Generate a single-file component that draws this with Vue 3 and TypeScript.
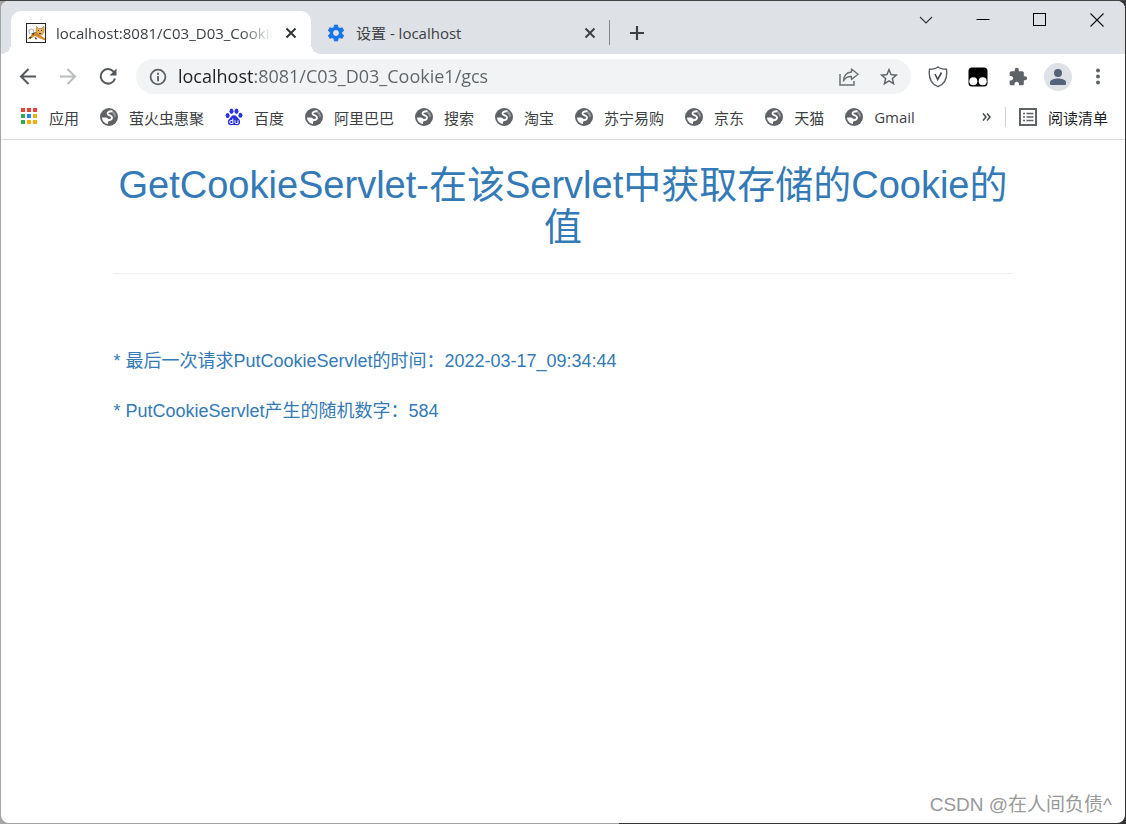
<script setup lang="ts">
import { ref } from 'vue'

interface Bookmark {
  label: string
  icon: 'globe' | 'apps' | 'paw'
}

const bookmarks: Bookmark[] = [
  { label: '应用', icon: 'apps' },
  { label: '萤火虫惠聚', icon: 'globe' },
  { label: '百度', icon: 'paw' },
  { label: '阿里巴巴', icon: 'globe' },
  { label: '搜索', icon: 'globe' },
  { label: '淘宝', icon: 'globe' },
  { label: '苏宁易购', icon: 'globe' },
  { label: '京东', icon: 'globe' },
  { label: '天猫', icon: 'globe' },
  { label: 'Gmail', icon: 'globe' },
]

const appColors = ['#ea4335', '#ea4335', '#ea4335', '#34a853', '#1e88f5', '#fbab0a', '#34a853', '#fbab0a', '#fbab0a']

const url = ref('localhost:8081/C03_D03_Cookie1/gcs')
const lastRequest = '2022-03-17_09:34:44'
const randomNumber = 584
</script>

<template>
  <div class="desktop">
    <div class="window">
      <header class="tabstrip">
        <div class="tab active">
          <svg class="favicon" width="20" height="20" viewBox="0 0 20 20" aria-hidden="true">
            <rect x="0.5" y="0.5" width="19" height="19" fill="#fff" stroke="#222" />
            <path d="M4 11 C2 9 3 6 5.500 6 S8 8 7 9" fill="none" stroke="#b5b5b5" stroke-width="1.200" />
            <path d="M1 16.500 L6 11.500 L10 8.500 L14 12 L19 15.500 L19 17.500 L13 15 L9 13 L5 15.500 Z" fill="#d58b28" />
            <path d="M10.500 3.500 L12.500 5.500 L15.500 5.500 L18 3.500 L18 9 L16 12 L12 11.500 L10 8 Z" fill="#e3b553" stroke="#a77524" stroke-width="0.600" />
            <path d="M5 11 L9 9 L7.500 12 Z M3 14 L6 14 L4 16 Z M8.500 14 L11 15 L10 17 Z" fill="#333" />
            <path d="M12 7h1v1h-1z M15 7h1v1h-1z M13 10h2v1h-2z" fill="#4a3514" />
          </svg>
          <span class="title fade">localhost:8081/C03_D03_Cookie1</span>
          <button class="close" aria-label="关闭标签页">
            <svg width="12" height="12" viewBox="0 0 12 12"><path d="M1.500 1.500 L10.500 10.500 M10.500 1.500 L1.500 10.500" stroke="#2d3034" stroke-width="1.900" /></svg>
          </button>
        </div>
        <div class="tab second">
          <svg class="favicon" width="20" height="20" viewBox="0 0 24 24" aria-hidden="true">
            <path fill="#1a73e8" d="M19.430 12.980c.04-.32.070-.64.070-.98s-.03-.66-.07-.98l2.110-1.650c.19-.15.24-.42.12-.64l-2-3.460c-.12-.22-.39-.3-.61-.22l-2.490 1c-.52-.4-1.080-.73-1.690-.98l-.38-2.650C14.460 2.180 14.250 2 14 2h-4c-.25 0-.46.180-.49.420l-.38 2.650c-.61.250-1.170.59-1.690.98l-2.490-1c-.23-.09-.49 0-.61.220l-2 3.460c-.13.220-.07.490.12.640l2.110 1.650c-.04.320-.07.650-.07.980s.03.660.07.980l-2.110 1.650c-.19.150-.24.420-.12.640l2 3.460c.12.220.39.300.61.220l2.490-1c.52.400 1.080.730 1.690.980l.38 2.650c.03.240.240.420.490.420h4c.25 0 .46-.18.490-.42l.38-2.650c.61-.25 1.170-.59 1.690-.98l2.490 1c.23.090.49 0 .61-.22l2-3.460c.12-.22.070-.49-.12-.64l-2.110-1.650zM12 15.500c-1.930 0-3.500-1.570-3.500-3.500s1.570-3.500 3.500-3.500 3.500 1.570 3.500 3.500-1.570 3.500-3.500 3.500z" />
          </svg>
          <span class="title">设置 - localhost</span>
          <button class="close" aria-label="关闭标签页">
            <svg width="12" height="12" viewBox="0 0 12 12"><path d="M1.500 1.500 L10.500 10.500 M10.500 1.500 L1.500 10.500" stroke="#3c4043" stroke-width="1.900" /></svg>
          </button>
        </div>
        <button class="new-tab" aria-label="新标签页">
          <svg width="16" height="16" viewBox="0 0 16 16"><path d="M8 1v14M1 8h14" stroke="#3c4043" stroke-width="2.200" /></svg>
        </button>
        <div class="controls">
          <button aria-label="搜索标签页">
            <svg width="14" height="14" viewBox="0 0 14 14"><path d="M1 4 L7 10 L13 4" fill="none" stroke="#333" stroke-width="1.100" /></svg>
          </button>
          <button aria-label="最小化">
            <svg width="14" height="14" viewBox="0 0 14 14"><path d="M0.500 6.500h13" stroke="#000" /></svg>
          </button>
          <button aria-label="最大化">
            <svg width="14" height="14" viewBox="0 0 14 14"><rect x="0.500" y="0.500" width="12" height="12" fill="none" stroke="#000" /></svg>
          </button>
          <button aria-label="关闭">
            <svg width="14" height="14" viewBox="0 0 14 14"><path d="M0.500 0.500 L13.500 13.500 M13.500 0.500 L0.500 13.500" stroke="#111" stroke-width="1.100" /></svg>
          </button>
        </div>
      </header>

      <nav class="toolbar" aria-label="导航">
        <button class="tool" aria-label="后退">
          <svg width="18" height="18" viewBox="0 0 18 18"><path d="M17 8.500H2M9.500 1 L2 8.500 L9.500 16" fill="none" stroke="#54585d" stroke-width="2" /></svg>
        </button>
        <button class="tool" aria-label="前进">
          <svg width="18" height="18" viewBox="0 0 18 18"><path d="M1 8.500h15M8.500 1 L16 8.500 L8.500 16" fill="none" stroke="#babcbe" stroke-width="2" /></svg>
        </button>
        <button class="tool" aria-label="重新加载">
          <svg width="18" height="18" viewBox="0 0 18 18">
            <path d="M14.800 3.800 A7.300 7.300 0 1 0 16 10.500" fill="none" stroke="#54585d" stroke-width="2" />
            <path d="M17.500 0.500 V7.500 H10.500 Z" fill="#54585d" />
          </svg>
        </button>
        <div class="omnibox">
          <button class="info" aria-label="查看网站信息">
            <svg width="18" height="18" viewBox="0 0 18 18"><circle cx="9" cy="9" r="7.400" fill="none" stroke="#5f6368" stroke-width="1.800" /><path d="M9 8v5.200M9 4.800v1.900" stroke="#5f6368" stroke-width="1.900" /></svg>
          </button>
          <input v-model="url" class="address" type="text" aria-label="地址" spellcheck="false" />
          <button class="tool" aria-label="分享">
            <svg width="20" height="18" viewBox="0 0 20 18">
              <path d="M1 6v11h14v-4" fill="none" stroke="#6b6f74" stroke-width="1.500" />
              <path d="M12.500 1 L19 6.200 L12.500 11.500 V8.500 C8.500 8.300 6 10 4.500 13 C4.800 7.500 8 4.300 12.500 4 Z" fill="none" stroke="#6b6f74" stroke-width="1.400" stroke-linejoin="round" />
            </svg>
          </button>
          <button class="tool" aria-label="添加书签">
            <svg width="22" height="22" viewBox="0 0 24 24"><path fill="#5f6368" d="M22 9.240l-7.190-.62L12 2 9.190 8.630 2 9.240l5.460 4.730L5.820 21 12 17.270 18.180 21l-1.630-7.030L22 9.240zM12 15.400l-3.760 2.270 1-4.280-3.320-2.880 4.380-.38L12 6.100l1.710 4.040 4.380.38-3.320 2.880 1 4.280L12 15.400z" /></svg>
          </button>
        </div>
        <button class="tool" aria-label="安全扩展">
          <svg width="20" height="22" viewBox="0 0 20 22">
            <path d="M10 1 C12.500 3 15.500 3.300 18.500 3.300 C19.500 11 18 17.500 10 20.700 C2 17.500 0.500 11 1.500 3.300 C4.500 3.300 7.500 3 10 1 Z" fill="#fff" stroke="#5a5e63" stroke-width="1.400" />
            <path d="M7 8 L9.700 13.500 L13.500 6.500" fill="none" stroke="#45494d" stroke-width="1.600" />
          </svg>
        </button>
        <button class="tool" aria-label="脚本扩展">
          <svg width="20" height="20" viewBox="0 0 20 20">
            <rect x="0.500" y="0.500" width="19" height="19" rx="3.500" fill="#000" />
            <circle cx="5.300" cy="14.200" r="4" fill="#fff" /><circle cx="14.700" cy="14.200" r="4" fill="#fff" />
          </svg>
        </button>
        <button class="tool" aria-label="扩展程序">
          <svg width="20" height="20" viewBox="0 0 24 24"><path fill="#5f6368" d="M20.500 11H19V7c0-1.100-.9-2-2-2h-4V3.500a2.500 2.500 0 0 0-5 0V5H4c-1.100 0-1.990.9-1.990 2v3.800H3.500c1.490 0 2.700 1.210 2.700 2.700s-1.210 2.700-2.700 2.700H2V20c0 1.100.9 2 2 2h3.800v-1.500c0-1.490 1.210-2.700 2.700-2.700s2.700 1.210 2.700 2.700V22H17c1.100 0 2-.9 2-2v-4h1.500a2.500 2.500 0 0 0 0-5z" /></svg>
        </button>
        <button class="tool" aria-label="个人资料">
          <svg width="28" height="28" viewBox="0 0 28 28">
            <circle cx="14" cy="14" r="14" fill="#dee1e6" />
            <circle cx="14" cy="10" r="4" fill="#56627a" />
            <path d="M6 21 V19.500 C6 16.500 10.500 15.500 14 15.500 S22 16.500 22 19.500 V21 Q22 22 21 22 H7 Q6 22 6 21 Z" fill="#56627a" />
          </svg>
        </button>
        <button class="tool" aria-label="菜单">
          <svg width="6" height="18" viewBox="0 0 6 18"><g fill="#5f6368"><circle cx="3" cy="2.500" r="2" /><circle cx="3" cy="8.500" r="2" /><circle cx="3" cy="14.500" r="2" /></g></svg>
        </button>
      </nav>

      <nav class="bookmarks" aria-label="书签">
        <a v-for="mark in bookmarks" :key="mark.label" class="bookmark" href="#">
          <svg v-if="mark.icon === 'apps'" width="18" height="18" viewBox="0 0 18 18" aria-hidden="true">
            <rect v-for="(color, i) in appColors" :key="i" :x="1 + (i % 3) * 6" :y="Math.floor(i / 3) * 6" width="4" height="4" :fill="color" />
          </svg>
          <svg v-else-if="mark.icon === 'paw'" width="18" height="18" viewBox="0 0 18 18" aria-hidden="true">
            <g fill="#2932e1">
              <ellipse cx="6.500" cy="3.300" rx="2" ry="2.700" /><ellipse cx="11.500" cy="3.300" rx="2" ry="2.700" />
              <ellipse cx="2.600" cy="7.500" rx="2" ry="2.500" /><ellipse cx="15.400" cy="7.300" rx="2" ry="2.500" />
              <path d="M9 7.300 C11.500 7.300 12 9.500 13.800 11 C16 13 15.500 17.500 12 17.300 C10 17 8 17 6 17.300 C2.500 17.500 2 13 4.200 11 C6 9.500 6.500 7.300 9 7.300 Z" />
            </g>
            <path d="M7.800 10.500v5M7.800 12.500h-2q-1 0-1 1.500t1 1.500h2M10 12.300v2.200q0 1 1 1h2v-3.200" fill="none" stroke="#fff" />
          </svg>
          <svg v-else width="18" height="18" viewBox="0 0 18 18" aria-hidden="true">
            <circle cx="9" cy="9" r="9" fill="#5f6368" />
            <path d="M2 9.500 L6 9.500 C7.500 9.500 8 11.500 9.500 11 L10 12.500 C9 13.500 8 13 8 14.500 L8 16 C4.500 15.500 2 12.500 2 9.500 Z" fill="#fff" />
            <path d="M12.500 3.300 C9 3 6.800 4.500 7.800 6.300 C8.800 7.700 12 7 12 9.500 C12 11.500 10.500 12 9 12" fill="none" stroke="#fff" stroke-width="1.900" />
            <path d="M12 2.500 C14.500 3.500 16 6 16 8.500 L14.500 9.500 C14.500 7.500 13.500 6.500 12.500 5.500 Z" fill="#d5d6d8" opacity="0.500" />
          </svg>
          <span>{{ mark.label }}</span>
        </a>
        <div class="reading">
          <button class="more" aria-label="更多书签">
            <svg width="9" height="8" viewBox="0 0 9 8"><path d="M1 0.500 L4 4 L1 7.500 M5 0.500 L8 4 L5 7.500" fill="none" stroke="#45494d" stroke-width="1.500" /></svg>
          </button>
          <button class="reading-list">
            <svg width="18" height="18" viewBox="0 0 18 18" aria-hidden="true">
              <rect x="1" y="1" width="16" height="16" fill="none" stroke="#5f6368" stroke-width="2" />
              <path d="M4 5.500h2M4 9h2M4 12.500h2M7.500 5.500h7M7.500 9h7M7.500 12.500h7" stroke="#5f6368" stroke-width="1.600" />
            </svg>
            <span>阅读清单</span>
          </button>
        </div>
      </nav>

      <main class="page">
        <h2>GetCookieServlet-在该Servlet中获取存储的Cookie的值</h2>
        <hr />
        <div class="results">
          <p>* 最后一次请求PutCookieServlet的时间：{{ lastRequest }}</p>
          <p>* PutCookieServlet产生的随机数字：{{ randomNumber }}</p>
        </div>
      </main>
      <span class="watermark">CSDN @在人间负债^</span>
    </div>
  </div>
</template>

<style>
html,
body {
  margin: 0;
}
</style>

<style scoped>
* {
  box-sizing: border-box;
}

.desktop {
  min-height: 100vh;
  padding: 1px;
  display: flex;
  background:
    linear-gradient(#444, #444) top / 100% 1px no-repeat,
    linear-gradient(90deg, #a5a5a5 55%, #333 55%);
  font-family: "Open Sans", "Noto Sans CJK SC", sans-serif;
  color: #3c4043;
}

.window {
  position: relative;
  flex: 1;
  min-width: 0;
  display: flex;
  flex-direction: column;
  background: #fff;
  border-radius: 8px;
  overflow: hidden;
}

button {
  display: flex;
  align-items: center;
  justify-content: center;
  padding: 0;
  border: 0;
  background: none;
  font: inherit;
  color: inherit;
}

svg {
  display: block;
  flex: none;
}

.tabstrip {
  display: flex;
  align-items: flex-end;
  height: 53px;
  padding-left: 10px;
  background: #dee1e6;
}

.tab {
  position: relative;
  display: flex;
  align-items: center;
  flex: 0 1 300px;
  min-width: 0;
  height: 43px;
  padding: 0 10px 0 15px;
  font-size: 15px;
}

.active {
  background: #fff;
  border-radius: 10px 10px 0 0;
}

.active::before,
.active::after {
  content: "";
  position: absolute;
  bottom: 0;
  width: 10px;
  height: 10px;
}

.active::before {
  right: 100%;
  background: radial-gradient(circle at 0 0, #dee1e6 10px, #fff 10px);
}

.active::after {
  left: 100%;
  background: radial-gradient(circle at 100% 0, #dee1e6 10px, #fff 10px);
}

.second {
  flex-basis: 299px;
}

.second::after {
  content: "";
  position: absolute;
  right: 0;
  top: 9px;
  width: 1px;
  height: 25px;
  background: #85898e;
}

.title {
  flex: 1 1 0;
  min-width: 0;
  margin: 0 8px 0 10px;
  overflow: hidden;
  white-space: nowrap;
}

.fade {
  mask-image: linear-gradient(90deg, #000 calc(100% - 32px), transparent);
}

.close {
  flex: none;
  width: 20px;
  height: 20px;
}

.new-tab {
  width: 34px;
  height: 43px;
  margin-left: 10px;
}

.controls {
  display: flex;
  align-self: flex-start;
  margin-left: auto;
}

.controls button {
  width: 57px;
  height: 38px;
}

.toolbar {
  display: flex;
  align-items: center;
  height: 45px;
  padding: 0 7px;
}

.tool {
  flex: none;
  width: 40px;
  height: 36px;
}

.omnibox {
  flex: 1;
  min-width: 0;
  display: flex;
  align-items: center;
  height: 35px;
  margin: 0 7px 0 8px;
  padding: 0 2px 0 8px;
  border-radius: 18px;
  background: #f1f3f4;
}

.info {
  flex: none;
  width: 28px;
  height: 28px;
}

.address {
  flex: 1;
  min-width: 0;
  padding: 0 0 2px;
  margin-left: 6px;
  border: 0;
  outline: 0;
  font: 18px/26px "Open Sans", sans-serif;
  color: transparent;
  caret-color: #202124;
  background: linear-gradient(90deg, #202124 76px, #5f6368 76px);
  background-clip: text;
}

.bookmarks {
  display: flex;
  align-items: center;
  gap: 21px;
  height: 41px;
  padding: 0 17px 4px 19px;
  border-bottom: 1px solid #dadce0;
  font-size: 15px;
}

.bookmark {
  display: flex;
  align-items: center;
  gap: 11px;
  white-space: nowrap;
  color: inherit;
  text-decoration: none;
}

.reading {
  display: flex;
  align-items: center;
  margin-left: auto;
}

.more {
  width: 28px;
  height: 20px;
}

.reading-list {
  gap: 11px;
  height: 20px;
  margin-left: 4px;
  padding-left: 13px;
  border-left: 1px solid #cdd0d4;
  white-space: nowrap;
  color: #202124;
}

.page {
  flex: 1;
  width: 80%;
  margin: 0 auto;
  color: #337ab7;
  font-family: "Liberation Sans", Arial, "Noto Sans CJK SC", sans-serif;
}

h2 {
  margin: 24px 0 0;
  font-size: 38px;
  font-weight: 400;
  line-height: 42px;
  text-align: center;
}

hr {
  height: 1px;
  margin: 25px 0 0;
  border: 0;
  background: #eee;
}

.results {
  padding-top: 75px;
}

p {
  margin: 0 0 25px;
  font-size: 18px;
  line-height: 25px;
}

.watermark {
  position: absolute;
  right: 13px;
  bottom: 4px;
  font: 19px/28px "Liberation Sans", "Noto Sans CJK SC", sans-serif;
  color: #999;
}
</style>
